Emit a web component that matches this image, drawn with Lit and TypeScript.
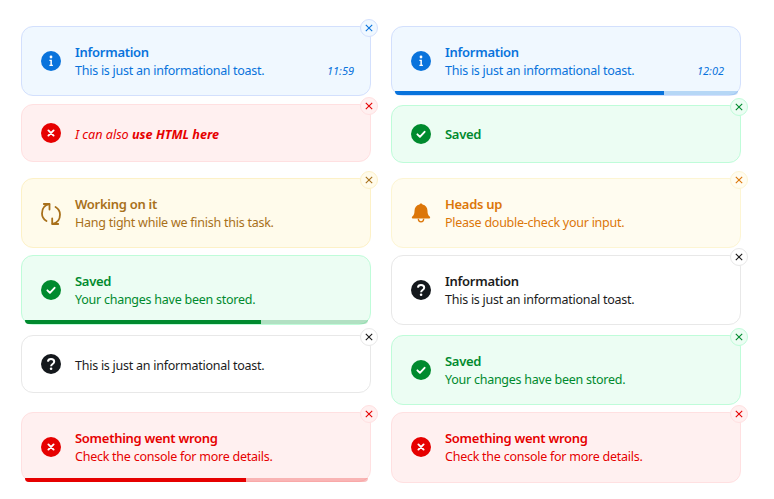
import { LitElement, html, css, svg, nothing } from 'lit';
import { customElement, property } from 'lit/decorators.js';

type Kind = 'info' | 'error' | 'loading' | 'success' | 'warning' | 'neutral';

interface Toast {
  kind: Kind;
  title?: string;
  desc?: string;
  rich?: boolean;
  time?: string;
  progress?: number;
  close?: boolean;
  ghost?: boolean;
  top: number;
}

const icons = {
  info: svg`<circle cx="10" cy="10" r="10" fill="currentColor"/><circle cx="10" cy="6" r="1.4" fill="#fff"/><path d="M8.4 8.8h2.5v5h1v1.3H8.4v-1.3h1v-3.7h-1z" fill="#fff"/>`,
  error: svg`<circle cx="10" cy="10" r="10" fill="currentColor"/><path d="M7.4 7.4l5.2 5.2M12.6 7.4l-5.2 5.2" stroke="#fff" stroke-width="1.9" stroke-linecap="round"/>`,
  success: svg`<circle cx="10" cy="10" r="10" fill="currentColor"/><path d="M6.4 10.3l2.5 2.5 4.7-5" fill="none" stroke="#fff" stroke-width="1.9" stroke-linecap="round" stroke-linejoin="round"/>`,
  neutral: svg`<circle cx="10" cy="10" r="10" fill="#14181c"/><path d="M6.900 7.600c.2-1.700 1.500-2.600 3.100-2.600 1.800 0 3.200 1 3.200 2.700 0 2.300-3.100 2.300-3.100 4.500" fill="none" stroke="#fff" stroke-width="2"/><circle cx="10.100" cy="14.800" r="1.300" fill="#fff"/>`,
  warning: svg`<path d="M10 .4c.9 0 1.500.6 1.500 1.200 3.200.6 4.900 3 5 6.200 0 2.600.3 4.200 2.400 6 .5.5.3 1.600-.6 1.600H1.700c-.9 0-1.100-1.100-.6-1.600 2.100-1.800 2.400-3.400 2.400-6 .1-3.200 1.800-5.600 5-6.200 0-.6.600-1.200 1.500-1.200z" fill="currentColor"/><path d="M7.300 15.800c0 1.900 1.200 3 2.700 3s2.700-1.100 2.700-3" fill="none" stroke="currentColor" stroke-width="1.300"/>`,
  loading: svg`<path d="M8.300 1.200C3.500 2 1 5.500 1 10.500 1 14 3 16.500 5.500 18M11.500 20.800c5-.8 7.500-4.300 7.500-9.300 0-3.500-2-6-4.500-7.500" fill="none" stroke="currentColor" stroke-width="1.800" stroke-linecap="round"/><path d="M2.800 1h5.700v5.500M17.200 21h-6v-5.500" fill="none" stroke="currentColor" stroke-width="1.800" stroke-linecap="round" stroke-linejoin="round"/>`,
};

const left: Toast[] = [
  { kind: 'info', title: 'Information', desc: 'This is just an informational toast.', time: '11:59', close: true, top: 0 },
  { kind: 'error', rich: true, close: true, top: 8 },
  { kind: 'loading', title: 'Working on it', desc: 'Hang tight while we finish this task.', close: true, top: 16 },
  { kind: 'success', title: 'Saved', desc: 'Your changes have been stored.', progress: 68.8, top: 7 },
  { kind: 'neutral', desc: 'This is just an informational toast.', close: true, top: 10 },
  { kind: 'error', title: 'Something went wrong', desc: 'Check the console for more details.', progress: 64.4, close: true, top: 19 },
];

const right: Toast[] = [
  { kind: 'info', title: 'Information', desc: 'This is just an informational toast.', time: '12:02', progress: 78.4, top: 0 },
  { kind: 'success', title: 'Saved', close: true, top: 9 },
  { kind: 'warning', title: 'Heads up', desc: 'Please double-check your input.', close: true, top: 15 },
  { kind: 'neutral', title: 'Information', desc: 'This is just an informational toast.', close: true, top: 7 },
  { kind: 'success', title: 'Saved', desc: 'Your changes have been stored.', close: true, top: 10 },
  { kind: 'error', title: 'Something went wrong', desc: 'Check the console for more details.', close: true, ghost: true, top: 7 },
];

@customElement('toast-card')
export class ToastCard extends LitElement {
  @property({ attribute: false }) toast!: Toast;

  static styles = css`
    :host {
      display: block;
    }
    .toast {
      position: relative;
      box-sizing: border-box;
      display: flex;
      align-items: center;
      gap: 14.5px;
      min-height: 58px;
      padding: 15.5px 16px 15.5px 18.5px;
      border: 1px solid;
      border-radius: 12px;
      font-family: 'Noto Sans', sans-serif;
      font-size: 12.5px;
      letter-spacing: -0.25px;
      line-height: 18px;
      color: var(--fg);
      background: var(--bg);
      border-color: var(--line);
    }
    .info { --fg: #0973dc; --bg: #f0f8ff; --line: #d3e0fd; }
    .error { --fg: #e60000; --bg: #fff0f0; --line: #ffe0e1; }
    .success { --fg: #008a2e; --bg: #ecfdf3; --line: #bffcd9; }
    .warning { --fg: #dc7609; --bg: #fffcf0; --line: #fdf5d3; }
    .loading { --fg: #a8701a; --bg: #fffbeb; --line: #fdf1c7; }
    .neutral { --fg: #1c1c1c; --bg: #fff; --line: #e8e8e8; }
    .icon {
      flex: none;
      width: 20px;
      height: 20px;
      overflow: visible;
    }
    .ghost-toast {
      padding-bottom: 16.5px;
    }
    .ghost-toast .icon {
      filter: drop-shadow(0 0 1px #fff);
    }
    .body {
      flex: 1;
      min-width: 0;
    }
    .no-title {
      padding-top: 3px;
    }
    .title {
      font-weight: 600;
      font-size: 13px;
      letter-spacing: -0.28px;
    }
    .line {
      display: flex;
      justify-content: space-between;
      align-items: center;
      margin-top: 1px;
    }
    .time {
      font-size: 11px;
      font-style: italic;
      letter-spacing: 0;
    }
    .rich {
      font-style: italic;
      font-size: 12.6px;
      letter-spacing: 0;
    }
    .close {
      position: absolute;
      top: -8px;
      right: -8px;
      box-sizing: border-box;
      display: flex;
      align-items: center;
      justify-content: center;
      width: 18px;
      height: 18px;
      padding: 0;
      border: 1px solid var(--line);
      border-radius: 50%;
      background: var(--bg);
      color: var(--fg);
    }
    .close svg {
      width: 10px;
      height: 10px;
    }
    .track {
      position: absolute;
      left: 3px;
      right: 2px;
      bottom: 0;
      height: 4px;
      overflow: hidden;
      border-radius: 0 0 11px 11px;
    }
    .error .track {
      bottom: -1px;
    }
    .track::before {
      content: '';
      position: absolute;
      inset: 0;
      background: var(--fg);
      opacity: 0.25;
    }
    .fill {
      position: relative;
      height: 100%;
      background: var(--fg);
    }
    .ghost {
      text-shadow: 0 0 2px #fff;
    }
  `;

  render() {
    const t = this.toast;
    return html`
      <div class="toast ${t.kind} ${t.ghost ? 'ghost-toast' : ''}">
        <svg class="icon" viewBox="0 0 20 20">${icons[t.kind]}</svg>
        <div class="body ${t.ghost ? 'ghost' : ''} ${t.title ? '' : 'no-title'}">
          ${t.title ? html`<div class="title">${t.title}</div>` : nothing}
          ${t.rich ? html`<div class="rich">I can also <b>use HTML here</b></div>` : nothing}
          ${t.desc
            ? html`<div class="line">
                <span>${t.desc}</span>
                ${t.time ? html`<span class="time">${t.time}</span>` : nothing}
              </div>`
            : nothing}
        </div>
        ${t.close
          ? html`<button class="close">
              <svg viewBox="0 0 10 10"><path d="M1.800 1.800l6.400 6.400M8.200 1.800l-6.400 6.400" stroke="currentColor" stroke-width="1.100" fill="none"/></svg>
            </button>`
          : nothing}
        ${t.progress
          ? html`<div class="track"><div class="fill" style="width: ${t.progress}%"></div></div>`
          : nothing}
      </div>
    `;
  }
}

@customElement('app-root')
export class AppRoot extends LitElement {
  static styles = css`
    :host {
      display: block;
      background: #fff;
    }
    .board {
      display: flex;
      gap: 20px;
      padding: 26px 21px;
    }
    .col {
      flex: none;
      width: 350px;
    }
  `;

  renderCol(items: Toast[]) {
    return html`<div class="col">
      ${items.map((t) => html`<toast-card style="margin-top: ${t.top}px" .toast=${t}></toast-card>`)}
    </div>`;
  }

  render() {
    return html`<div class="board">${this.renderCol(left)}${this.renderCol(right)}</div>`;
  }
}
